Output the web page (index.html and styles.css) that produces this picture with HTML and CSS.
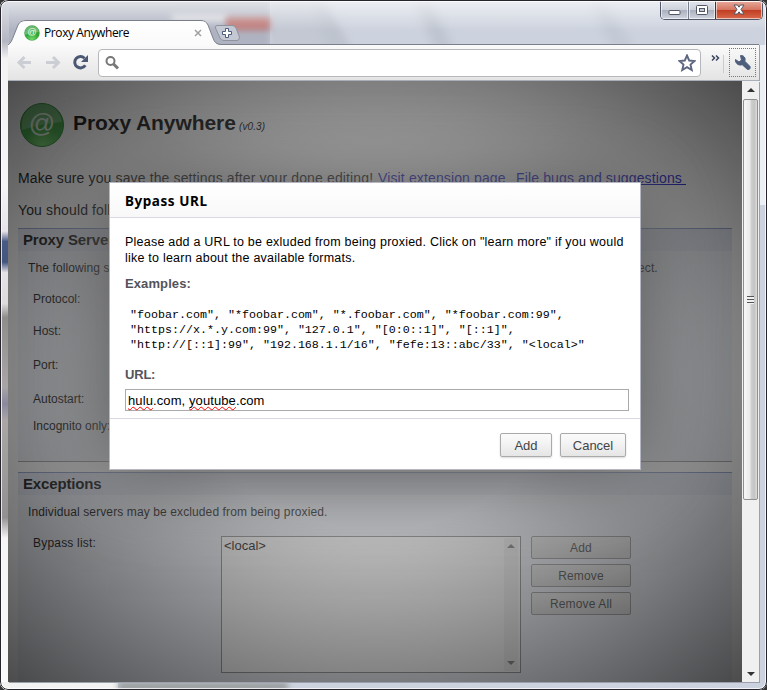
FILE: index.html
```html
<!DOCTYPE html>
<html lang="en">
<head>
<meta charset="utf-8">
<title>Proxy Anywhere</title>
<link rel="stylesheet" href="styles.css">
</head>
<body>
<div class="window">
  <svg class="glass" width="767" height="690" aria-hidden="true">
    <defs>
      <linearGradient id="top" x1="0" y1="0" x2="0" y2="1"><stop offset="0" stop-color="#fff" stop-opacity=".65"/><stop offset=".5" stop-color="#fff" stop-opacity="0"/></linearGradient>
      <filter id="b3" x="-50%" y="-100%" width="200%" height="300%"><feGaussianBlur stdDeviation="3"/></filter>
      <filter id="b6" x="-50%" y="-50%" width="200%" height="200%"><feGaussianBlur stdDeviation="6"/></filter>
      <linearGradient id="left" x1="0" y1="0" x2="0" y2="1">
        <stop offset="0" stop-color="#dfe1e8"/><stop offset=".06" stop-color="#b4b7c2"/><stop offset=".085" stop-color="#f3f3f4"/><stop offset=".27" stop-color="#f5f4f6"/><stop offset=".335" stop-color="#e6e4ea"/><stop offset=".35" stop-color="#4a5a86"/><stop offset=".38" stop-color="#445580"/><stop offset=".395" stop-color="#e4e2e6"/><stop offset=".44" stop-color="#dedbdc"/><stop offset=".46" stop-color="#8f8c8c"/><stop offset=".56" stop-color="#a9a5a6"/><stop offset=".585" stop-color="#8a88a0"/><stop offset=".61" stop-color="#aaa6a6"/><stop offset=".75" stop-color="#929091"/><stop offset=".78" stop-color="#f6f4f5"/><stop offset="1" stop-color="#fafafa"/>
      </linearGradient>
    </defs>
    <rect width="767" height="690" fill="#cdd3de"/>
    <rect width="270" height="60" fill="#afb3c1"/>
    <path d="M270 0H320L360 60H270z" fill="#c3c8d3" filter="url(#b3)"/>
    <path d="M310 0H325L352 60H335z" fill="#bdc3ce" filter="url(#b6)"/>
    <path d="M415 0H429L458 60H440z" fill="#bdc3ce" filter="url(#b6)"/>
    <path d="M590 0H604L638 55H615z" fill="#c2c9d4" filter="url(#b6)"/>
    <rect x="172" y="14" width="55" height="8" fill="#d6d8de" filter="url(#b3)"/>
    <rect x="226" y="17" width="44" height="13" fill="#bd7775" filter="url(#b3)"/>
    <rect width="767" height="60" fill="url(#top)"/>
    <rect width="9" height="690" fill="url(#left)"/>
    <rect x="758" y="45" width="9" height="160" fill="#eceff4"/>
    <rect y="682" width="118" height="8" fill="#f2f2f2"/>
    <rect x="118" y="683" width="170" height="7" fill="#8b8f8e" filter="url(#b3)"/>
  </svg>

  <header class="tabstrip">
    <svg class="tabshape" width="240" height="34" aria-hidden="true">
      <defs><linearGradient id="tg" x1="0" y1="0" x2="0" y2="1"><stop offset="0" stop-color="#fff"/><stop offset="1" stop-color="#f9f9f9"/></linearGradient></defs>
      <path d="M8 28C11 26 12 23 14 18L18 8Q20 3 26 3H201Q206 3 208 8L213 21Q215 28 221 28V34H8z" fill="url(#tg)"/>
      <path d="M8 28C11 26 12 23 14 18L18 8Q20 3.500 26 3.500H201Q206 3.500 208 8L213 21Q215 27.500 221 27.500H240" fill="none" stroke="#7b7f8a"/>
      <path d="M217 8.500H232Q235 8.500 236 11L239.500 20Q239.500 23.500 237 23.500H224Q221 23.500 220 21L215.500 11Q215 8.500 217 8.500z" fill="#c4c8d3" stroke="#8f939f"/>
      <path d="M225.500 11.500h3v3h3v3h-3v3h-3v-3h-3v-3h3z" fill="#fff" stroke="#4e5b7e"/>
    </svg>
    <svg class="favicon" width="16" height="16" viewBox="0 0 46 46"><use href="#logo"/></svg>
    <span class="tabtitle">Proxy Anywhere</span>
    <svg class="tabclose" width="8" height="8"><path d="M1 1l6 6M7 1l-6 6" stroke="#a0a0a0" stroke-width="1.500"/></svg>
  </header>

  <div class="winbuttons">
    <span class="wb wmin"><svg width="14" height="6"><rect x="1" y=".5" width="11" height="4" rx="1" fill="#fff" stroke="#535666"/></svg></span>
    <span class="wb wmax"><svg width="12" height="11"><rect x=".5" y=".5" width="11" height="9" rx="1" fill="#fff" stroke="#535666"/><rect x="3.500" y="3.500" width="5" height="3" fill="#c5c9d2" stroke="#535666"/></svg></span>
    <span class="wb wclose"><svg width="14" height="12" viewBox="0 0 14 12"><path d="M2 1h3.500L7 3.200 8.500 1H12L9 5.500 12 10H8.500L7 7.800 5.500 10H2L5 5.500z" fill="#fff" stroke="#535666"/></svg></span>
  </div>

  <div class="toolbar">
    <svg class="nav" width="96" height="34" aria-hidden="true">
      <path d="M23 15.500H11.500M16.500 10l-5.500 5.500 5.500 5.500" fill="none" stroke="#cbced4" stroke-width="3"/>
      <path d="M38 15.500H49.500M45 10l5.500 5.500-5.500 5.500" fill="none" stroke="#cbced4" stroke-width="3"/>
      <path d="M76.500 11.200A5.700 5.700 0 1 0 77.300 18.200" fill="none" stroke="#4b5874" stroke-width="3"/>
      <path d="M80 8v7h-7z" fill="#4b5874"/>
    </svg>
    <div class="omnibox">
      <svg width="16" height="16"><circle cx="5.500" cy="6" r="4" fill="none" stroke="#777" stroke-width="2"/><path d="M8.500 9l4.500 4.500" stroke="#777" stroke-width="3"/></svg>
      <svg width="18" height="18" viewBox="0 0 18 18"><path d="M9 1.500l2.200 5 5.400.5-4.100 3.600 1.300 5.400L9 13.200 4.200 16l1.300-5.400L1.400 7l5.400-.5z" fill="#fff" stroke="#5d6782" stroke-width="1.900"/></svg>
    </div>
    <svg class="more" width="14" height="34"><path d="M1 6.500l2.500 2.500L1 11.500M5 6.500l2.500 2.500L5 11.500" fill="none" stroke="#38445f" stroke-width="1.500"/><path d="M12.500 6v18" stroke="#ccc"/></svg>
    <div class="wrench"><svg width="18" height="18" viewBox="0 0 18 18"><path d="M1.500 5.500L5 8l2.500-2L6.500 1.600C9.500 1 12 4 10.800 7.200L16 12.500Q16.800 15.800 13.500 15.500L8.200 10.700C5 12 1 9.500 1.500 5.500z" fill="#4d5d7c" stroke="#4d5d7c"/></svg></div>
  </div>

  <div class="viewport">
    <main class="page">
      <div class="brand">
        <svg width="46" height="46" viewBox="0 0 46 46">
          <defs><radialGradient id="lg" cx=".5" cy=".95" r=".9"><stop offset="0" stop-color="#74dc6c"/><stop offset=".5" stop-color="#34a83a"/><stop offset="1" stop-color="#2f9c38"/></radialGradient></defs>
          <g id="logo"><circle cx="23" cy="23" r="21.500" fill="url(#lg)" stroke="#2c8a35"/><path d="M3 24A20 20 0 0 1 43 20Q25 21 3 28z" fill="#fff" opacity=".28"/><text x="23" y="30" text-anchor="middle" font-family="Liberation Sans" font-size="26" fill="#eaffea">@</text></g>
        </svg>
        <h1>Proxy Anywhere</h1><em>(v0.3)</em>
      </div>
      <p class="lead"><span class="mk">Make sure you save the settings after your done editing!</span> <a class="l1">Visit extension page&nbsp;</a> <a class="l2">File bugs and suggestions&nbsp;</a></p>
      <p class="lead second">You should follow</p>
      <section class="first">
        <h2>Proxy Server</h2>
        <p class="desc split"><span>The following settings</span><span>ect.</span></p>
        <div class="rows"><span>Protocol:</span><span>Host:</span><span>Port:</span><span>Autostart:</span><span>Incognito only:</span></div>
      </section>
      <section class="last">
        <h2>Exceptions</h2>
        <p class="desc ind">Individual servers may be excluded from being proxied.</p>
        <div class="bypass">
          <label>Bypass list:</label>
          <div class="list"><span>&lt;local&gt;</span><div class="lbar"><i class="up"></i><i class="down"></i></div></div>
          <div class="actions"><button>Add</button><button>Remove</button><button>Remove All</button></div>
        </div>
      </section>
    </main>
    <div class="overlay">
      <div class="dialog">
        <div class="dtitle">Bypass URL</div>
        <div class="dbody">
          <p class="ask">Please add a URL to be exluded from being proxied. Click on "learn more" if you would<br>like to learn about the available formats.</p>
          <h3>Examples:</h3>
          <pre>"foobar.com", "*foobar.com", "*.foobar.com", "*foobar.com:99",
"https://x.*.y.com:99", "127.0.1", "[0:0::1]", "[::1]",
"http://[::1]:99", "192.168.1.1/16", "fefe:13::abc/33", "&lt;local&gt;"</pre>
          <h3 class="u">URL:</h3>
          <div class="field"><span class="sp">hulu</span>.com, <span class="sp">youtube</span>.com</div>
        </div>
        <div class="dfoot"><button class="ok">Add</button><button class="cancel">Cancel</button></div>
      </div>
    </div>
    <div class="scroll"><i class="up"></i><div class="thumb"><b></b></div><i class="down"></i></div>
  </div>
</div>
</body>
</html>
```
FILE: styles.css
```css
* { box-sizing: border-box; }
html { background: #333; }
body { margin: 0; width: 767px; height: 690px; overflow: hidden; font-family: "Liberation Sans", Arial, sans-serif; }
.window { position: relative; width: 767px; height: 690px; padding: 0 8px 8px 8px; border-radius: 8px; overflow: hidden; }
.window::after { content: ""; position: absolute; inset: 0; border: 1px solid #25252b; border-radius: 8px; box-shadow: inset 0 0 0 1px rgba(255,255,255,.75); pointer-events: none; }
.glass { position: absolute; left: 0; top: 0; }
.tabstrip { position: relative; height: 45px; display: flex; align-items: center; padding: 21px 0 0 16px; }
.tabstrip::after { content: ""; position: absolute; left: 220px; right: 0; top: 44px; height: 1px; background: #7b7f8a; }
.tabshape { position: absolute; left: -8px; top: 17px; }
.favicon, .tabtitle, .tabclose { position: relative; }
.tabtitle { margin-left: 4px; font: 12px/20px "Open Sans", sans-serif; letter-spacing: -.4px; width: 150px; }
.winbuttons { position: absolute; left: 660px; top: 1px; display: flex; width: 103px; height: 19px; border: 1px solid #535666; border-top: 0; border-radius: 0 0 5px 5px; overflow: hidden; }
.wb { display: flex; align-items: center; justify-content: center; background: linear-gradient(#e4e7ed, #cbd0da 48%, #a9afbd 50%, #cfd4de); box-shadow: inset 0 0 0 1px rgba(255,255,255,.6); }
.wmin { width: 28px; padding-top: 5px; border-right: 1px solid #7a7e8c; }
.wmax { width: 27px; border-right: 1px solid #5b2a28; }
.wclose { flex: 1; background: linear-gradient(#e8ac9e, #d47560 48%, #c03c22 50%, #d9694b); }
.toolbar { position: relative; height: 36px; display: flex; align-items: flex-start; background: linear-gradient(#fafafa, #e4e4e4); border-bottom: 1px solid #a9aebb; padding-top: 3px; box-shadow: 1px 0 #9aa0ac; }
.nav { width: 90px; flex: none; margin-top: -1px; }
.omnibox { width: 603px; height: 28px; margin-top: 1px; border: 1px solid #b5b7bc; border-radius: 4px; background: #fff; display: flex; align-items: center; justify-content: space-between; padding: 0 4px 0 6px; }
.more { margin: 1px 0 0 10px; }
.wrench { width: 27px; height: 29px; margin-left: 4px; border: 1px dotted #777; display: flex; align-items: center; justify-content: center; }
.viewport { position: relative; display: flex; height: 601px; background: #fff; box-shadow: 1px 1px #9aa0ac; }
.page { width: 734px; height: 601px; overflow: hidden; padding: 0 10px; color: #000; }
.brand { display: flex; align-items: baseline; height: 87px; padding-top: 21px; }
.brand svg { align-self: flex-start; margin: 0 8px 0 1px; }
h1 { margin: 0; font-size: 21px; line-height: 42px; letter-spacing: -.07px; width: 166px; white-space: nowrap; }
em { font-size: 10px; letter-spacing: .1px; }
.lead { margin: 0; font-size: 14px; line-height: 20px; height: 32px; white-space: nowrap; letter-spacing: .13px; }
.second { height: 28px; }
a { color: #0000cc; text-decoration: underline; }
.mk { display: inline-block; width: 356px; }
.l1 { display: inline-block; width: 134px; }
section { background: #f0f3fa; border-top: 1px solid #8398c8; }
.first { height: 234px; border-bottom: 1px solid #999; margin-bottom: 10px; }
.last { height: 300px; }
h2 { margin: 0; height: 22px; font-size: 15px; line-height: 21px; letter-spacing: -.15px; padding-left: 5px; background: #e2e8f5; }
.desc { margin: 0; padding: 8px 0 0 10px; font-size: 12px; line-height: 18px; letter-spacing: .11px; }
.split { display: flex; }
.split span:first-child { width: 610px; }
.rows { display: grid; grid-template-rows: 32px 34px 34px 27px 20px; padding: 13px 0 0 15px; font-size: 12px; line-height: 18px; }
.bypass { display: flex; padding: 15px 0 0 15px; font-size: 12px; }
.bypass label { width: 188px; line-height: 14px; letter-spacing: .2px; }
.list { width: 300px; height: 137px; border: 1px solid #888; background: #fff; padding: 1px 2px; font-size: 13px; display: flex; justify-content: space-between; }
.lbar { width: 14px; background: #f3f3f3; display: flex; flex-direction: column; align-items: center; justify-content: space-between; padding: 6px 0; }
.up, .down { width: 0; height: 0; border: 4px solid transparent; border-top: 0; border-bottom: 4px solid #333; }
.down { border-top: 4px solid #333; border-bottom: 0; }
.lbar .up { border-bottom-color: #777; }
.lbar .down { border-top-color: #777; }
.actions { display: flex; flex-direction: column; gap: 5px; padding-left: 10px; }
button { font: 13px "Liberation Sans", Arial, sans-serif; color: #444; padding: 0; border: 1px solid #aaa; border-radius: 2px; background: linear-gradient(#fafafa, #f4f4f4 40%, #e5e5e5); }
.actions button { width: 100px; height: 23px; font-size: 12px; letter-spacing: .15px; border-color: #999; background: linear-gradient(#eee, #ddd); }
.overlay { position: absolute; left: 0; top: 0; width: 734px; height: 601px; overflow: hidden; padding: 101px 0 0 101px; background: radial-gradient(rgba(127,127,127,.5), rgba(127,127,127,.5) 35%, rgba(0,0,0,.7)); }
.dialog { width: 532px; height: 288px; background: #fff; border: 1px solid #b5b7c5; box-shadow: 0 5px 80px #505050; }
.dtitle { height: 35px; padding-left: 15px; font: bold 13.5px/36px "Noto Sans", sans-serif; letter-spacing: .55px; background: linear-gradient(#fff, #f8f8f8); border-bottom: 1px solid #d9d9e3; }
.dbody { height: 201px; padding: 16px 11px 0 15px; border-bottom: 1px solid #d9d9e3; }
.ask { margin: 0 0 8px; font-size: 12.5px; letter-spacing: .225px; line-height: 16px; white-space: nowrap; }
h3 { margin: 0; font-size: 13px; line-height: 20px; color: #53535b; letter-spacing: .1px; }
pre { margin: 14px 0 12px 5px; font: 11.665px/15px "Liberation Mono", monospace; }
.u { letter-spacing: -.2px; }
.field { height: 22px; margin-top: 4px; border: 1px solid #aaa; padding-left: 2px; font-size: 13px; line-height: 21px; letter-spacing: .1px; }
.sp { text-decoration: underline wavy #f00 1px; text-underline-offset: 1px; text-decoration-skip-ink: none; }
.dfoot { display: flex; justify-content: flex-end; gap: 8px; padding: 14px 14px 0; }
.dfoot button { height: 24px; width: 66px; box-shadow: 0 1px 2px rgba(0,0,0,.15); }
.dfoot .ok { width: 52px; }
.scroll { width: 17px; background: #f0f0f0; display: flex; flex-direction: column; align-items: center; padding: 7px 0 6px; }
.thumb { width: 15px; height: 401px; margin: 7px 0 auto; border: 1px solid #8f8f8f; border-radius: 2px; background: linear-gradient(90deg, #f6f6f6, #ebebeb 45%, #cfcfcf 55%, #c4c4c4 80%, #ddd); display: flex; align-items: center; justify-content: center; }
.thumb b { width: 7px; height: 8px; background: repeating-linear-gradient(#555 0 1px, #f0f0f0 1px 3px); }
```
